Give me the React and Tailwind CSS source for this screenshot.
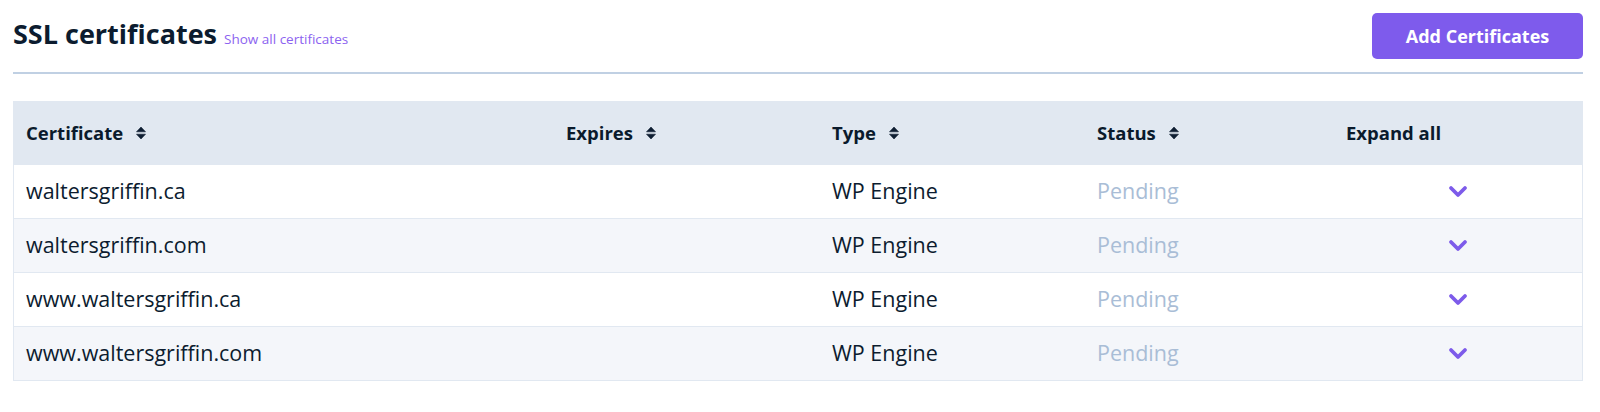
import React from "react";

const font = { fontFamily: '"Open Sans", "Noto Sans", sans-serif' };

function SortIcon() {
  return (
    <svg width="10" height="14" viewBox="0 0 10 14" className="ml-[13px] shrink-0">
      <path d="M5 1 L9.5 5.8 L0.5 5.8 Z" fill="#0f1f33" strokeLinejoin="round" stroke="#0f1f33" strokeWidth="0.6" />
      <path d="M5 13 L9.5 8.2 L0.5 8.2 Z" fill="#0f1f33" strokeLinejoin="round" stroke="#0f1f33" strokeWidth="0.6" />
    </svg>
  );
}

function Chevron() {
  return (
    <svg width="20" height="13" viewBox="0 0 20 13">
      <path d="M3 3 L10 10 L17 3" fill="none" stroke="#7d5bea" strokeWidth="3.8" strokeLinecap="round" strokeLinejoin="round" />
    </svg>
  );
}

const rows = [
  "waltersgriffin.ca",
  "waltersgriffin.com",
  "www.waltersgriffin.ca",
  "www.waltersgriffin.com",
];

export default function App() {
  return (
    <div className="w-[1600px] h-[412px] bg-white pl-[13px] pr-[17px] pt-[13px]" style={font}>
      <div className="flex items-start justify-between border-b-2 border-[#c0d0e3] h-[61px]">
        <div className="flex items-baseline gap-[7px] pt-[3px]">
          <h1 className="text-[27px] leading-[36px] font-bold text-[#0c1c2f]">SSL certificates</h1>
          <a className="text-[13.5px] text-[#8c63f0]">Show all certificates</a>
        </div>
        <button className="w-[211px] h-[46px] rounded-[5px] bg-[#7e5bec] text-white text-[18px] font-bold">
          Add Certificates
        </button>
      </div>
      <div className="mt-[27px] border border-[#e1e8f1]">
        <div className="grid grid-cols-[540px_266px_265px_249px_1fr] h-[62px] bg-[#e1e8f1] items-center text-[18.5px] font-bold text-[#0a1a2c]">
          <div className="flex items-center pl-[12px]">Certificate<SortIcon /></div>
          <div className="flex items-center pl-[12px]">Expires<SortIcon /></div>
          <div className="flex items-center pl-[12px]">Type<SortIcon /></div>
          <div className="flex items-center pl-[12px]">Status<SortIcon /></div>
          <div className="flex items-center pl-[12px]">Expand all</div>
        </div>
        {rows.map((r, i) => (
          <div
            key={r}
            className={`grid grid-cols-[540px_266px_265px_249px_1fr] h-[54px] items-center text-[21.5px] border-t border-[#e1e8f1] ${i % 2 === 1 ? "bg-[#f4f6fa]" : "bg-white"}`}
          >
            <div className="pl-[12px] text-[#0c1c2f]">{r}</div>
            <div className="pl-[12px]"></div>
            <div className="pl-[12px] text-[#0c1c2f]">WP Engine</div>
            <div className="pl-[12px] text-[#a9bdd6]">Pending</div>
            <div className="flex justify-center items-center"><Chevron /></div>
          </div>
        ))}
      </div>
    </div>
  );
}
